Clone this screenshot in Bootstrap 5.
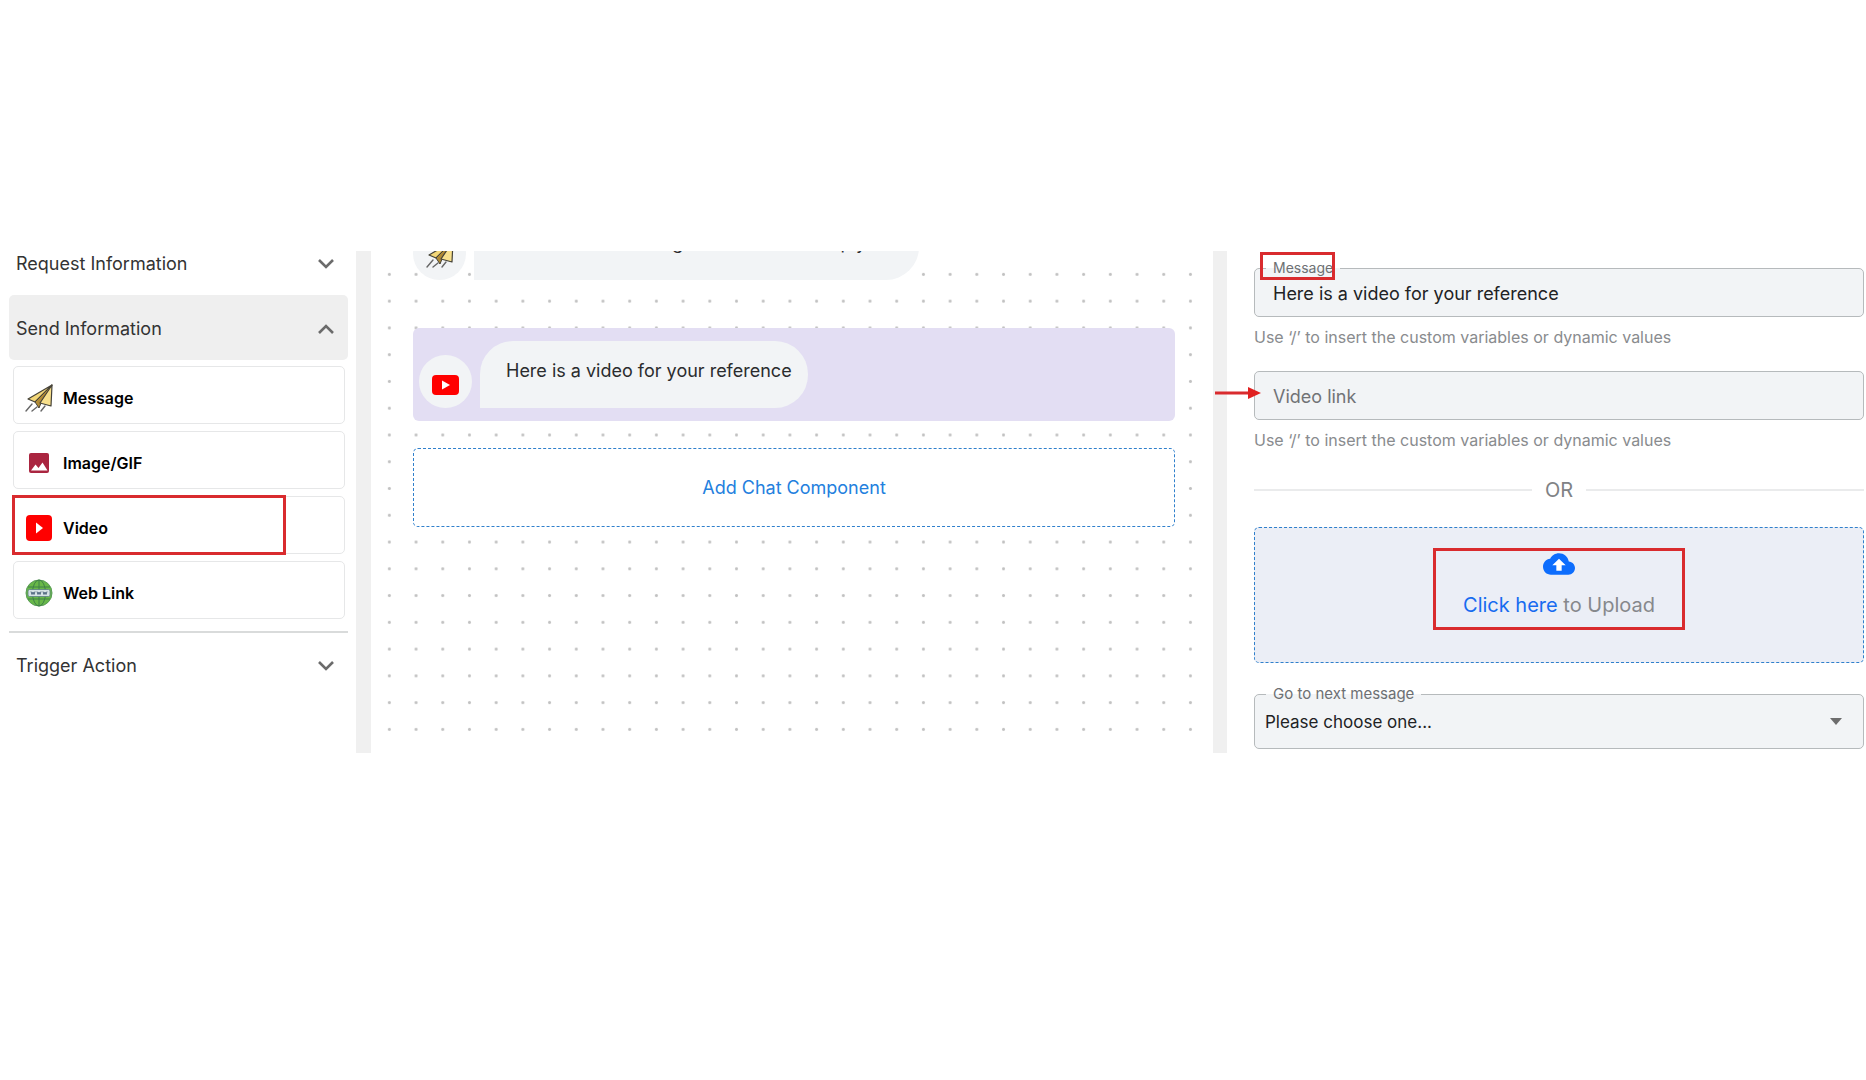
<!DOCTYPE html>
<html lang="en">
<head>
<meta charset="utf-8">
<meta name="viewport" content="width=device-width, initial-scale=1">
<title>Chatbot builder</title>
<link href="https://cdn.jsdelivr.net/npm/bootstrap@5.3.0/dist/css/bootstrap.min.css" rel="stylesheet">
<style>
  body { font-family: Inter, "Liberation Sans", sans-serif; font-size: 18px; line-height: 24px; color: #2b2c2e; background: #fff; }
  .builder { display: grid; grid-template-columns: minmax(0, 356fr) 15px minmax(0, 842fr) 14px minmax(0, 639fr); margin-top: 251px; min-height: 502px; overflow: hidden; }
  .gutter { background: #f0f0f0; }
  /* component list */
  .palette { padding: 0 8px 0 9px; }
  .section-toggle { height: 65px; padding: 2px 14px 0 7px; border: 0; border-radius: 5px; background: #fff; color: #333; }
  .section-toggle.first { margin-top: -21px; }
  .section-toggle.open { background: #efefef; }
  .section-toggle.last { border-top: 2px solid #d9dbdb; border-radius: 0; height: 66px; }
  .parts { padding: 6px 3px 12px 4px; gap: 7px; }
  .part { position: relative; height: 58px; border: 1px solid #e6e7e8; border-radius: 5px; background: #fff; padding: 5px 11px 0; gap: 10px; font-size: 16px; font-weight: 600; color: #000; text-align: left; }
  .marked { position: absolute; border: 3px solid #d92b2e; pointer-events: none; }
  .mark-video { inset: -2px 58px -2px -2px; }
  /* flow canvas */
  .flow { position: relative; z-index: 0; padding: 0 38px 0 42px; }
  .flow::before { content: ""; position: absolute; z-index: -1; inset: 10px 9px 10px 5px; background: radial-gradient(circle, #c2c2c2 1px, transparent 2px) 0 0 / 27px 27px round; }
  .said { gap: 8px; }
  .said.past { margin-top: -38px; margin-bottom: 48px; }
  .said.active { background: #e3def3; border-radius: 6px; padding: 13px 6px; margin-bottom: 27px; }
  .avatar { width: 53px; height: 53px; border-radius: 50%; background: #f2f4f6; }
  .avatar.low { padding-top: 6px; }
  .bubble { height: 67px; padding: 18px 16px 0 26px; border-radius: 33px 33px 33px 0; background: #f2f4f6; white-space: nowrap; }
  .add-part { height: 79px; border: 1px dashed #3080cc; border-radius: 5px; background: #fff; color: #2380de; }
  /* settings */
  .settings { padding: 17px 2px 0 27px; }
  .field { position: relative; }
  .field label { position: absolute; left: 12px; top: -10px; padding: 0 7px; font-size: 14px; line-height: 20px; color: #6d7073; background: linear-gradient(#fff 10px, #f2f4f6 10px); }
  .field .next-label { font-size: 15px; }
  .field input, .field select { display: block; width: 100%; height: 49px; border: 1px solid #b6babc; border-radius: 5px; background: #f2f4f6; color: #212224; padding: 2px 18px 0; }
  .field input::placeholder { color: #717376; opacity: 1; }
  .field select { appearance: none; height: 55px; padding: 0 10px; font-size: 17px; }
  .field .caret { position: absolute; right: 22px; top: 24px; pointer-events: none; }
  .mark-label { left: 6px; top: -16px; width: 75px; height: 28px; }
  .pointer { position: absolute; left: -40px; top: 15px; }
  .hint { font-size: 16px; color: #898b8e; line-height: 24px; padding: 8px 0 22px; }
  .or-row { gap: 13px; margin-top: 4px; font-size: 20px; color: #808285; }
  .or-row hr { flex: 1; margin: 0; border-color: #dcdddf; border-width: 2px; opacity: .6; }
  .upload { height: 136px; margin: 25px 0 31px; border: 1px dashed #3080cc; border-radius: 5px; background: #ebeef6; font-size: 20px; color: #86888c; }
  .upload a { color: #176bf0; text-decoration: none; }
  .upload-target { position: relative; height: 82px; margin-top: 20px; padding: 2px 30px 0; }
  .upload-target .marked { inset: 0; }
  .upload-target p { margin: 15px 0 0; }
</style>
<script src="https://cdn.jsdelivr.net/npm/bootstrap@5.3.0/dist/js/bootstrap.bundle.min.js"></script>
</head>
<body>
<svg class="d-none" aria-hidden="true">
  <symbol id="plane" viewBox="0 0 28 28">
    <path d="M27 1 3 15l7 3z" fill="#f3d778" stroke="#454238" stroke-width="1.2" stroke-linejoin="round"/>
    <path d="M27 1 10 18l4 6 2-5z" fill="#b08a35" stroke="#454238" stroke-linejoin="round"/>
    <path d="M27 1 15 19l11 3z" fill="#f8e08c" stroke="#454238" stroke-width="1.2" stroke-linejoin="round"/>
    <path d="m7 20-6 7M12 23l-5 4M20 22l-4 5" stroke="#666" stroke-width="1.4" stroke-linecap="round"/>
  </symbol>
  <symbol id="down" viewBox="0 0 16 10"><path d="m1 1 7 7 7-7" fill="none" stroke="#6b6b6b" stroke-width="2.6"/></symbol>
  <symbol id="up" viewBox="0 0 16 10"><path d="m1 9 7-7 7 7" fill="none" stroke="#6b6b6b" stroke-width="2.6"/></symbol>
</svg>
<main class="builder">
  <aside class="palette d-flex flex-column">
    <button class="section-toggle first d-flex align-items-center justify-content-between">Request Information <svg width="16" height="10"><use href="#down"/></svg></button>
    <button class="section-toggle open d-flex align-items-center justify-content-between">Send Information <svg width="16" height="10"><use href="#up"/></svg></button>
    <div class="parts d-flex flex-column">
      <button class="part d-flex align-items-center"><svg width="28" height="28"><use href="#plane"/></svg>Message</button>
      <button class="part d-flex align-items-center">
        <svg width="28" height="28" viewBox="0 0 28 28"><rect x="4" y="4" width="20" height="20" rx="2" fill="#aa2540"/><path d="M6 21.500l4.500-6 3 3.500 4-5.500 5 8z" fill="#fff"/></svg>Image/GIF</button>
      <button class="part d-flex align-items-center">
        <svg width="28" height="28" viewBox="0 0 28 28"><rect x="1" y="1" width="26" height="26" rx="4" fill="#f00"/><path d="m11 8.500 7 5.500-7 5.500z" fill="#fff"/></svg>Video
        <span class="marked mark-video"></span></button>
      <button class="part d-flex align-items-center">
        <svg width="28" height="28" viewBox="0 0 28 28"><circle cx="14" cy="14" r="13" fill="#68b848" stroke="#5a9c58"/><g fill="none" stroke="#3f8048" stroke-width="1"><ellipse cx="14" cy="14" rx="6.500" ry="13"/><path d="M14 1v26M3 8h22M3 20h22"/></g><rect x="3" y="10.500" width="22" height="7" rx="1.500" fill="#d5e2e6" stroke="#597f80" stroke-width=".8"/><path d="m6 12.500 1 3 1-2.500 1 2.500 1-3m2 0 1 3 1-2.500 1 2.500 1-3m2 0 1 3 1-2.500 1 2.500 1-3" fill="none" stroke="#4f6780" stroke-width="1"/></svg>Web Link</button>
    </div>
    <button class="section-toggle last d-flex align-items-center justify-content-between">Trigger Action <svg width="16" height="10"><use href="#down"/></svg></button>
  </aside>
  <div class="gutter"></div>
  <section class="flow d-flex flex-column">
    <div class="said past d-flex align-items-end">
      <div class="avatar d-flex align-items-center justify-content-center"><svg width="28" height="28"><use href="#plane"/></svg></div>
      <div class="bubble">Here is a text message that I can now reply to it</div>
    </div>
    <div class="said active d-flex align-items-end">
      <div class="avatar low d-flex align-items-center justify-content-center"><svg width="27" height="20" viewBox="0 0 27 20"><rect width="27" height="20" rx="4" fill="#f00"/><path d="m10 5.500 8 4.500-8 4.500z" fill="#fff"/></svg></div>
      <div class="bubble">Here is a video for your reference</div>
    </div>
    <button class="add-part">Add Chat Component</button>
  </section>
  <div class="gutter"></div>
  <form class="settings">
    <div class="field"><input id="msg" type="text" value="Here is a video for your reference"><label for="msg">Message</label><span class="marked mark-label"></span></div>
    <div class="hint">Use ‘/’ to insert the custom variables or dynamic values</div>
    <div class="field"><input type="text" placeholder="Video link" aria-label="Video link">
      <svg class="pointer" width="48" height="14" viewBox="0 0 48 14"><path d="M1 7h36" stroke="#d92b2e" stroke-width="3"/><path d="M34 1v12l13-6z" fill="#e02020"/></svg></div>
    <div class="hint">Use ‘/’ to insert the custom variables or dynamic values</div>
    <div class="or-row d-flex align-items-center"><hr>OR<hr></div>
    <div class="upload d-flex justify-content-center align-items-start">
      <div class="upload-target d-flex flex-column align-items-center">
        <svg width="32" height="28" viewBox="0 2 24 20"><path d="M19.350 10.040C18.670 6.590 15.640 4 12 4 9.110 4 6.600 5.640 5.350 8.040 2.340 8.360 0 10.910 0 14c0 3.310 2.690 6 6 6h13c2.760 0 5-2.240 5-5 0-2.640-2.050-4.780-4.650-4.960z" fill="#0d6dfd"/><path d="M14 13v4h-4v-4H7l5-5 5 5z" fill="#fff"/></svg>
        <p><a href="#">Click here</a> to Upload</p>
        <span class="marked"></span>
      </div>
    </div>
    <div class="field"><select id="next"><option>Please choose one...</option></select><label class="next-label" for="next">Go to next message</label>
      <svg class="caret" width="12" height="7" viewBox="0 0 12 7"><path d="M0 0h12L6 7z" fill="#6d6d6d"/></svg></div>
  </form>
</main>
</body>
</html>
